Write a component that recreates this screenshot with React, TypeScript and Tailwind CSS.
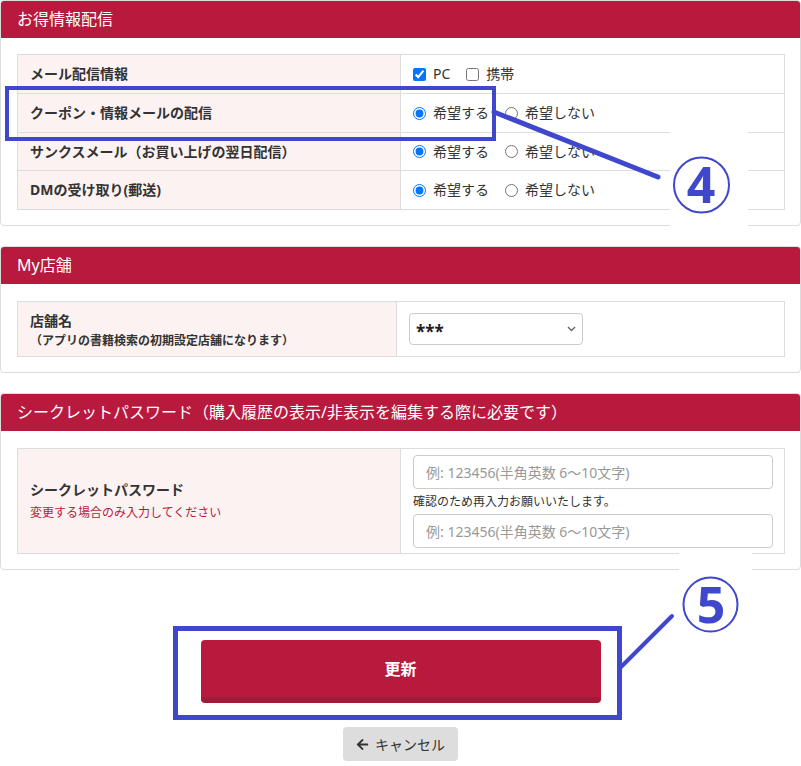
import React from "react";
import { FaArrowLeft } from "react-icons/fa";

export default function App() {
  return (
    <div className="relative h-[766px] w-[801px] overflow-hidden bg-white text-[#333] font-['Noto_Sans','Noto_Sans_CJK_JP',sans-serif]">
      {/* Panel 1 */}
      <section className="rounded-[4px] border border-[#dcdcdc] bg-white">
        <h2 className="flex h-[37px] items-center rounded-t-[3px] bg-[#b81a3e] pb-[2px] pl-4 text-[16px] font-normal leading-none text-white">
          お得情報配信
        </h2>
        <div className="pb-[15px] pl-4 pr-[15px] pt-4">
          <div className="grid grid-cols-[383px_1fr] border-l border-t border-[#ddd] text-[14px] leading-none">
            <div className="flex h-[39px] items-center border-b border-r border-[#ddd] bg-[#fcf2f2] pl-3 font-bold">メール配信情報</div>
            <div className="flex h-[39px] items-center gap-4 border-b border-r border-[#ddd] pl-3">
              <label className="flex items-center gap-[7px]">
                <input type="checkbox" defaultChecked className="m-0 h-[13px] w-[13px]" />
                PC
              </label>
              <label className="flex items-center gap-[7px]">
                <input type="checkbox" className="m-0 h-[13px] w-[13px]" />
                携帯
              </label>
            </div>

            <div className="flex h-[39px] items-center border-b border-r border-[#ddd] bg-[#fcf2f2] pl-3 font-bold">クーポン・情報メールの配信</div>
            <div className="flex h-[39px] items-center gap-4 border-b border-r border-[#ddd] pl-3">
              <label className="flex items-center gap-[7px]">
                <input type="radio" name="r1" defaultChecked className="m-0 h-[13px] w-[13px]" />
                希望する
              </label>
              <label className="flex items-center gap-[7px]">
                <input type="radio" name="r1" className="m-0 h-[13px] w-[13px]" />
                希望しない
              </label>
            </div>

            <div className="flex h-[38px] items-center border-b border-r border-[#ddd] bg-[#fcf2f2] pl-3 font-bold">サンクスメール（お買い上げの翌日配信）</div>
            <div className="flex h-[38px] items-center gap-4 border-b border-r border-[#ddd] pl-3">
              <label className="flex items-center gap-[7px]">
                <input type="radio" name="r2" defaultChecked className="m-0 h-[13px] w-[13px]" />
                希望する
              </label>
              <label className="flex items-center gap-[7px]">
                <input type="radio" name="r2" className="m-0 h-[13px] w-[13px]" />
                希望しない
              </label>
            </div>

            <div className="flex h-[39px] items-center border-b border-r border-[#ddd] bg-[#fcf2f2] pl-3 font-bold">DMの受け取り(郵送)</div>
            <div className="flex h-[39px] items-center gap-4 border-b border-r border-[#ddd] pl-3">
              <label className="flex items-center gap-[7px]">
                <input type="radio" name="r3" defaultChecked className="m-0 h-[13px] w-[13px]" />
                希望する
              </label>
              <label className="flex items-center gap-[7px]">
                <input type="radio" name="r3" className="m-0 h-[13px] w-[13px]" />
                希望しない
              </label>
            </div>
          </div>
        </div>
      </section>

      {/* Panel 2 */}
      <section className="mt-5 rounded-[4px] border border-[#dcdcdc] bg-white">
        <h2 className="flex h-[37px] items-center rounded-t-[3px] bg-[#b81a3e] pb-[2px] pl-4 text-[16px] font-normal leading-none text-white">
          My店舗
        </h2>
        <div className="pb-[15px] pl-4 pr-[15px] pt-[17px]">
          <div className="grid grid-cols-[379px_1fr] border-l border-t border-[#ddd]">
            <div className="flex h-[55px] flex-col border-b border-r border-[#ddd] bg-[#fcf2f2] pl-3 pt-[9px] font-bold">
              <div className="text-[14px] leading-[20px]">店舗名</div>
              <div className="text-[12px] leading-[20px]">（アプリの書籍検索の初期設定店舗になります）</div>
            </div>
            <div className="flex h-[55px] items-center border-b border-r border-[#ddd] pl-3">
              <div className="relative w-[174px]">
                <select className="h-[32px] w-full appearance-none rounded-[4px] border border-[#ccc] bg-white pl-[6px] pt-[5px] text-[17px] font-bold text-[#222]">
                  <option>***</option>
                </select>
                <svg className="pointer-events-none absolute right-[7px] top-[13px]" width="9" height="6" viewBox="0 0 9 6">
                  <path d="M1 1 L4.5 4.5 L8 1" fill="none" stroke="#666" strokeWidth="1.4" />
                </svg>
              </div>
            </div>
          </div>
        </div>
      </section>

      {/* Panel 3 */}
      <section className="mt-5 rounded-[4px] border border-[#dcdcdc] bg-white">
        <h2 className="flex h-[37px] items-center rounded-t-[3px] bg-[#b81a3e] pb-[2px] pl-4 text-[16px] font-normal leading-none text-white">
          シークレットパスワード（購入履歴の表示/非表示を編集する際に必要です）
        </h2>
        <div className="pb-[15px] pl-4 pr-[15px] pt-[17px]">
          <div className="grid grid-cols-[383px_1fr] border-l border-t border-[#ddd]">
            <div className="flex flex-col justify-center border-b border-r border-[#ddd] bg-[#fcf2f2] pl-3">
              <div className="text-[14px] font-bold leading-[22px]">シークレットパスワード</div>
              <div className="mt-[2px] text-[12px] leading-[20px] text-[#b81a3e]">変更する場合のみ入力してください</div>
            </div>
            <div className="flex flex-col border-b border-r border-[#ddd] pb-[5px] pl-3 pr-[11px] pt-[6px]">
              <input
                type="text"
                placeholder="例: 123456(半角英数 6～10文字)"
                className="h-[34px] w-full rounded-[4px] border border-[#ccc] px-3 text-[14px] placeholder:text-[#999]"
              />
              <div className="flex h-[25px] items-center text-[12px] leading-none">確認のため再入力お願いいたします。</div>
              <input
                type="text"
                placeholder="例: 123456(半角英数 6～10文字)"
                className="h-[34px] w-full rounded-[4px] border border-[#ccc] px-3 text-[14px] placeholder:text-[#999]"
              />
            </div>
          </div>
        </div>
      </section>

      {/* Buttons */}
      <div className="mt-[70px] flex flex-col items-center">
        <button className="flex h-[63px] w-[400px] items-center justify-center rounded-[4px] border-b-[6px] border-[#a21a37] bg-[#b81a3e] text-[16px] font-bold text-white">
          更新
        </button>
        <button className="mt-6 flex h-[34px] w-[115px] items-center justify-center gap-[6px] rounded-[4px] bg-[#ddd] text-[14px] text-[#333]">
          <FaArrowLeft className="h-[13px] w-[13px]" />
          キャンセル
        </button>
      </div>

      {/* Annotations */}
      <div className="absolute left-[670px] top-[128px] h-[104px] w-[78px] bg-white" />
      <div className="absolute left-[679px] top-[549px] h-[92px] w-[73px] bg-white" />
      <div className="absolute left-[5px] top-[86px] h-[55px] w-[491px] border-[4px] border-[#3f48cc]" />
      <div className="absolute left-[173px] top-[626px] h-[94px] w-[449px] border-[5px] border-[#3f48cc]" />
      <svg className="pointer-events-none absolute left-0 top-0" width="801" height="766" viewBox="0 0 801 766">
        <line x1="494" y1="112" x2="658" y2="177" stroke="#3f48cc" strokeWidth="5" strokeLinecap="round" />
        <line x1="672" y1="616" x2="621" y2="667" stroke="#3f48cc" strokeWidth="4" strokeLinecap="round" />
        <circle cx="701.5" cy="185" r="27.5" fill="none" stroke="#3f48cc" strokeWidth="2" />
        <text x="701" y="203" textAnchor="middle" fontFamily="Noto Sans, sans-serif" fontWeight="700" fontSize="50" fill="#3f48cc">4</text>
        <circle cx="710.5" cy="604.5" r="27" fill="none" stroke="#3f48cc" strokeWidth="2" />
        <text x="711" y="623" textAnchor="middle" fontFamily="Noto Sans, sans-serif" fontWeight="700" fontSize="50" fill="#3f48cc">5</text>
      </svg>
    </div>
  );
}
